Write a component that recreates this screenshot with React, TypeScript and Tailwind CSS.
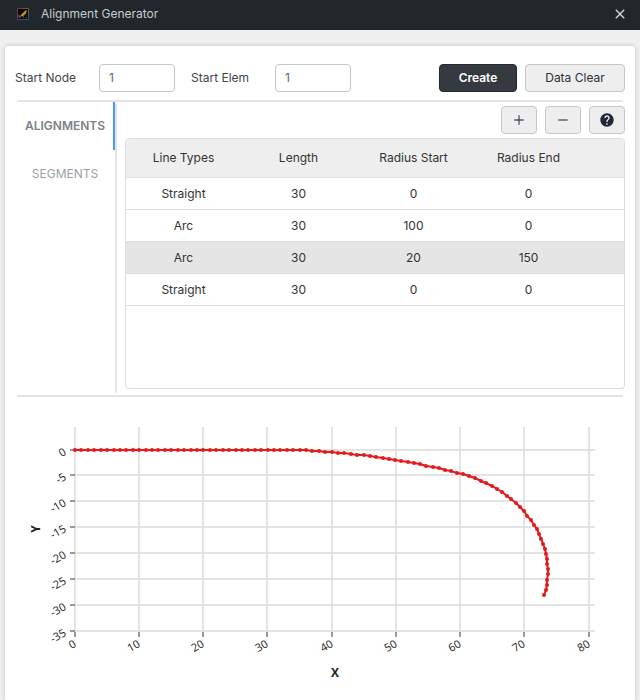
import { useState } from "react";
import { MdAdd, MdClose, MdHelp, MdRemove } from "react-icons/md";

const rows = [
  ["Straight", 30, 0, 0],
  ["Arc", 30, 100, 0],
  ["Arc", 30, 20, 150],
  ["Straight", 30, 0, 0],
];

const xTicks = [75, 139, 203, 267, 332, 396, 460, 524, 589];
const yTicks = [450, 475, 501, 527, 553, 579, 605, 631];

const straight = Array.from({ length: 36 }, (_, i) => [Math.round(75 + i * 6.42), 450]);
const curve = [
  [306, 450], [312, 451], [319, 451], [325, 452], [332, 452], [338, 453], [344, 453], [351, 454],
  [357, 455], [364, 455], [370, 456], [376, 457], [383, 458], [389, 459], [395, 460], [401, 461],
  [408, 462], [414, 463], [420, 464], [426, 466], [433, 467], [439, 468], [445, 470], [451, 471],
  [457, 473], [463, 474], [469, 476], [475, 478], [481, 481], [486, 483], [492, 486], [497, 489],
  [502, 492], [507, 496], [511, 499], [516, 503], [520, 507], [524, 511], [527, 516], [531, 520],
  [534, 525], [537, 529], [539, 534], [541, 539], [543, 544], [545, 549], [546, 554], [547, 559],
  [547, 564], [548, 569], [548, 574], [547, 580], [547, 585], [546, 590], [544, 595],
];
const points = [...straight, ...curve];

const lightButton =
  "flex h-7 items-center justify-center rounded-[4px] border border-[#c4c6c8] bg-[#eeeeee]";

function Field({ id, label }: { id: string; label: string }) {
  return (
    <div className="flex items-center">
      <label htmlFor={id} className="w-[84px] text-[#3f444c]">
        {label}
      </label>
      <input
        id={id}
        defaultValue="1"
        className="h-7 w-[76px] rounded-[4px] border border-[#c4c6c8] bg-white px-[9px] pb-px text-[#5f666f] outline-none"
      />
    </div>
  );
}

function AlignmentChart() {
  return (
    <svg viewBox="5 397 630 303" className="block w-full" role="img" aria-label="Alignment plot">
      <g stroke="#dddddd" strokeOpacity="0.8" strokeWidth="2">
        {xTicks.map((x) => (
          <line key={x} x1={x} x2={x} y1="427" y2="631" />
        ))}
        {yTicks.map((y) => (
          <line key={y} x1="75" x2="595" y1={y} y2={y} />
        ))}
      </g>
      <g stroke="#999999" strokeWidth="2">
        {xTicks.map((x) => (
          <line key={x} x1={x} x2={x} y1="632" y2="637" />
        ))}
        {yTicks.map((y) => (
          <line key={y} x1="70" x2="75" y1={y} y2={y} />
        ))}
      </g>
      <g fill="#222222" fontFamily="'Open Sans', 'Noto Sans', sans-serif" fontSize="11" textAnchor="end">
        {xTicks.map((x, i) => (
          <text key={x} transform={`translate(${x + 2} 646) rotate(-30)`}>
            {i * 10}
          </text>
        ))}
        {yTicks.map((y, i) => (
          <text key={y} transform={`translate(67 ${y + 4}) rotate(-30)`}>
            {i * -5}
          </text>
        ))}
      </g>
      <g
        fill="#222222"
        fontFamily="'Open Sans', 'Noto Sans', sans-serif"
        fontSize="12"
        fontWeight="700"
        textAnchor="middle"
      >
        <text x="335" y="677">X</text>
        <text transform="translate(40 529) rotate(-90)">Y</text>
      </g>
      <polyline
        points={points.map((p) => p.join(",")).join(" ")}
        fill="none"
        stroke="#e41a1c"
        strokeWidth="2"
      />
      <g fill="#e41a1c">
        {points.map(([x, y], i) => (
          <circle key={i} cx={x} cy={y} r="2" />
        ))}
      </g>
    </svg>
  );
}

export default function App() {
  const [tab, setTab] = useState("ALIGNMENTS");
  return (
    <div className="flex min-h-screen flex-col bg-[#f0f0f0] font-['Inter',sans-serif] text-xs text-[#333333]">
      <header className="flex h-[30px] items-center justify-between bg-[#22272b] pb-[3px] pl-[17px] pr-3">
        <div className="flex items-center gap-3">
          <svg width="12" height="12" viewBox="0 0 12 12" aria-hidden="true">
            <rect width="12" height="12" fill="#08090b" />
            <path d="M0.5 6V0.5H6" fill="none" stroke="#7a3550" />
            <path d="M6 0.5H11.5V6" fill="none" stroke="#66602a" />
            <path d="M11.5 6V11.5H6" fill="none" stroke="#2f5f80" />
            <path d="M6 11.5H0.5V6" fill="none" stroke="#51418c" />
            <path d="M4 8L9.500 2.500M5 8L9 4.500" stroke="#d19a10" strokeWidth="1.500" />
            <path d="M2 9H4M2 7V9M9 9V10M6 9H7" stroke="#a37b18" />
          </svg>
          <h1 className="text-[#c6ccd1]">Alignment Generator</h1>
        </div>
        <button aria-label="Close" className="text-[#d5d8db]">
          <MdClose size={16} />
        </button>
      </header>

      <main className="mx-[5px] mt-4 flex-1 rounded-t-[4px] bg-white pt-[18px] shadow-[0_0_5px_rgba(0,0,0,0.2)]">
        <div className="flex h-7 items-center justify-between px-[10px]">
          <div className="flex gap-4">
            <Field id="start-node" label="Start Node" />
            <Field id="start-elem" label="Start Elem" />
          </div>
          <div className="flex gap-2">
            <button className="h-7 w-[78px] rounded-[4px] border border-[#22272f] bg-[#343a40] font-semibold text-white">
              Create
            </button>
            <button className={`${lightButton} w-[100px] text-[#2d3138]`}>Data Clear</button>
          </div>
        </div>

        <hr className="mx-3 mt-2 border-t-2 border-[#e4e4e4]" />

        <section className="flex h-[293px] pl-3 pr-[10px]">
          <div role="tablist" aria-orientation="vertical" className="flex w-[98px] flex-col">
            {["ALIGNMENTS", "SEGMENTS"].map((name) => (
              <button
                key={name}
                role="tab"
                aria-selected={tab === name}
                onClick={() => setTab(name)}
                className={
                  tab === name
                    ? "h-12 border-r-2 border-[#4a9bee] font-semibold text-[#7b8187]"
                    : "h-12 border-r-2 border-transparent text-[#9a9fa5]"
                }
              >
                {name}
              </button>
            ))}
          </div>
          <div className="my-0.5 w-0.5 bg-[#e4e4e4]" />
          <div className="flex min-w-0 flex-1 flex-col gap-1 pb-[6px] pl-2 pt-1">
            <div className="flex justify-end gap-2">
              <button aria-label="Add row" className={`${lightButton} w-9 text-[#4b5563]`}>
                <MdAdd size={16} />
              </button>
              <button aria-label="Remove row" className={`${lightButton} w-9 text-[#4b5563]`}>
                <MdRemove size={16} />
              </button>
              <button aria-label="Help" className={`${lightButton} w-9 text-[#1f2937]`}>
                <MdHelp size={16} />
              </button>
            </div>
            <div className="flex-1 overflow-hidden rounded-[4px] border border-[#dddddd]">
              <table className="w-full table-fixed border-separate border-spacing-0 text-center">
                <thead>
                  <tr className="h-[39px] bg-[#eeeeee]">
                    {["Line Types", "Length", "Radius Start", "Radius End"].map((name) => (
                      <th
                        key={name}
                        scope="col"
                        className="w-[115px] border-b border-[#dddddd] p-0 font-normal"
                      >
                        {name}
                      </th>
                    ))}
                    <td className="border-b border-[#dddddd] p-0" />
                  </tr>
                </thead>
                <tbody>
                  {rows.map((row, i) => (
                    <tr key={i} className={i === 2 ? "h-8 bg-[#e5e5e5]" : "h-8"}>
                      {row.map((value, j) => (
                        <td key={j} className="border-b border-[#dddddd] p-0">
                          {value}
                        </td>
                      ))}
                      <td className="border-b border-[#dddddd] p-0" />
                    </tr>
                  ))}
                </tbody>
              </table>
            </div>
          </div>
        </section>

        <hr className="mx-3 border-t-2 border-[#e4e4e4]" />
        <AlignmentChart />
      </main>
    </div>
  );
}
